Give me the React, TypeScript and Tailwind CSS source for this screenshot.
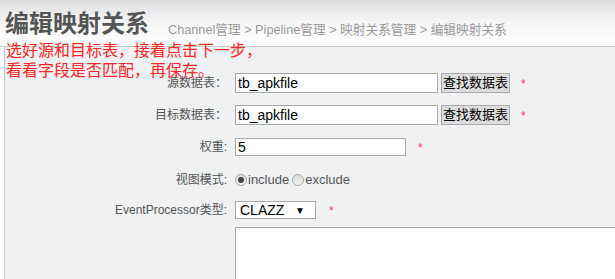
import React from 'react'

const FONT = { fontFamily: '"Liberation Sans", Arial, "Noto Sans CJK SC", sans-serif' }

function Star() {
  return <span className="text-[12px] leading-none text-[#f0386b]">*</span>
}

function Label({ children }: { children: React.ReactNode }) {
  return (
    <div className="w-[222px] shrink-0 text-right text-[12px] leading-[16px] text-[#555]">
      {children}
    </div>
  )
}

function Radio({ checked }: { checked?: boolean }) {
  return (
    <span className="flex h-[12px] w-[12px] items-center justify-center rounded-full border border-[#a8a8a8] bg-gradient-to-b from-[#dcdcdc] to-[#f4f4f4]">
      {checked && <span className="h-[6px] w-[6px] rounded-full bg-[#444]" />}
    </span>
  )
}

function TableRow({ label }: { label: string }) {
  return (
    <div className="flex h-[20px] items-center">
      <Label>{label}</Label>
      <div className="ml-[8px] flex h-[20px] w-[203px] items-center border border-[#a9a9a9] bg-white pl-[2px] text-[14px] text-black">
        tb_apkfile
      </div>
      <button className="ml-[3px] h-[20px] w-[69px] border border-[#aaa] bg-[#dddddd] text-center text-[13px] leading-[18px] text-black">
        查找数据表
      </button>
      <span className="ml-[11px]"><Star /></span>
    </div>
  )
}

export default function App() {
  return (
    <div className="relative h-[279px] w-[615px] overflow-hidden bg-white" style={FONT}>
      {/* header */}
      <div className="flex h-[47px] border-b border-[#c6c6c6] bg-gradient-to-b from-[#dfdfe1] via-[#f6f6f7] to-white pl-[5px] pt-[8px]">
        <h1
          className="text-[24px] font-bold leading-[28px] text-[#555]"
          style={{ fontFamily: '"Noto Sans CJK SC", sans-serif' }}
        >
          编辑映射关系
        </h1>
        <div className="ml-[19px] mt-[14px] text-[12.7px] leading-[16px] text-[#999]">
          Channel管理 &gt; Pipeline管理 &gt; 映射关系管理 &gt; 编辑映射关系
        </div>
      </div>

      {/* form */}
      <div className="ml-[4px] h-[232px] border-l border-[#c6c6c6] bg-[#f0f1f3] pt-[26px]">
        <TableRow label="源数据表：" />
        <div className="mt-[12px]">
          <TableRow label="目标数据表：" />
        </div>

        <div className="mt-[13px] flex h-[18px] items-center">
          <Label>权重:</Label>
          <div className="ml-[8px] flex h-[18px] w-[171px] items-center border border-[#a9a9a9] bg-white pl-[2px] text-[14px] text-black">
            5
          </div>
          <span className="ml-[12px]"><Star /></span>
        </div>

        <div className="mt-[16px] flex h-[16px] items-center">
          <Label>视图模式:</Label>
          <div className="ml-[8px] flex items-center text-[13px] leading-[16px] text-[#555]">
            <Radio checked />
            <span className="ml-[1px]">include</span>
            <span className="ml-[3px]"><Radio /></span>
            <span className="ml-[1px]">exclude</span>
          </div>
        </div>

        <div className="mt-[13px] flex h-[18px] items-center">
          <Label>EventProcessor类型:</Label>
          <div className="ml-[8px] flex h-[18px] w-[81px] items-center justify-between border border-[#a9a9a9] bg-white pl-[4px] pr-[10px] text-[14px] text-black">
            <span>CLAZZ</span>
            <span className="text-[10px]">▼</span>
          </div>
          <span className="ml-[13px]"><Star /></span>
        </div>

        <div className="ml-[230px] mt-[8px] h-[80px] w-[400px] border border-[#a9a9a9] bg-white" />
      </div>

      {/* annotation */}
      <div
        className="absolute left-[6px] top-[39px] text-[16px] leading-[20px] text-[#ff2424]"
        style={{ fontFamily: '"Noto Sans CJK SC", sans-serif' }}
      >
        <div>选好源和目标表，接着点击下一步，</div>
        <div>看看字段是否匹配，再保存。</div>
      </div>
    </div>
  )
}
